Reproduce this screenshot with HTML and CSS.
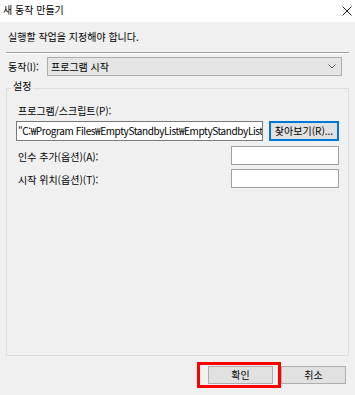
FILE: index.html
```html
<!DOCTYPE html>
<html lang="ko">
<head>
<meta charset="utf-8">
<link rel="stylesheet" href="styles.css">
</head>
<body>
<div class="window">
  <div class="titlebar">
    <span class="title">새 동작 만들기</span>
    <svg class="close" width="10" height="10" viewBox="0 0 10 10"><path d="M0.5 0.5 L9.5 9.5 M9.5 0.5 L0.5 9.5" stroke="#222" stroke-width="1" fill="none"/></svg>
  </div>
  <div class="content">
    <p class="instruction">실행할 작업을 지정해야 합니다.</p>
    <div class="separator"></div>
    <div class="action-row">
      <span class="action-label">동작(I):</span>
      <div class="combo">
        <span class="combo-text">프로그램 시작</span>
        <svg class="chevron" width="8" height="5" viewBox="0 0 8 5"><path d="M0.5 0.5 L4 4 L7.5 0.5" stroke="#606060" stroke-width="1" fill="none"/></svg>
      </div>
    </div>
    <fieldset class="group">
      <legend class="group-title">설정</legend>
      <div class="field-label">프로그램/스크립트(P):</div>
      <div class="program-row">
        <div class="textbox program"><span class="program-text">"C:₩Program Files₩EmptyStandbyList₩EmptyStandbyList.exe"</span></div>
        <div class="btn browse">찾아보기(R)...</div>
      </div>
      <div class="opt-row first">
        <span class="opt-label">인수 추가(옵션)(A):</span>
        <div class="textbox opt"></div>
      </div>
      <div class="opt-row">
        <span class="opt-label">시작 위치(옵션)(T):</span>
        <div class="textbox opt"></div>
      </div>
    </fieldset>
    <div class="footer">
      <div class="ok-wrap"><div class="btn dialog-btn">확인</div></div>
      <div class="btn dialog-btn">취소</div>
    </div>
  </div>
</div>
</body>
</html>
```

FILE: styles.css
```css
* { box-sizing: border-box; }
html, body { margin: 0; padding: 0; }
body {
  font-family: "Noto Sans CJK KR", "Noto Sans", sans-serif;
  font-size: 10px;
  color: #000;
  background: #f0f0f0;
}
.window {
  width: 355px;
  height: 395px;
  display: flex;
  flex-direction: column;
  overflow: hidden;
}
.titlebar {
  height: 22px;
  background: #fff;
  display: flex;
  align-items: center;
  justify-content: space-between;
  padding: 0 3px 2px 3px;
  line-height: 14px;
}
.title { color: #000; }
.close { display: block; margin-top: 1px; }
.content {
  flex: 1;
  background: #f0f0f0;
  display: flex;
  flex-direction: column;
  padding: 0 6px;
}
.instruction {
  margin: 8px 0 0 2px;
  line-height: 14px;
}
.separator {
  margin-top: 8px;
  border-top: 1px solid #a0a0a0;
  border-bottom: 1px solid #fff;
}
.action-row {
  margin-top: 3px;
  display: flex;
  align-items: center;
  height: 19px;
}
.action-label {
  width: 41px;
  padding-left: 2px;
  line-height: 14px;
}
.combo {
  width: 295px;
  height: 19px;
  background: #e5e5e5;
  border: 1px solid #adadad;
  display: flex;
  align-items: center;
  justify-content: space-between;
  padding: 0 5px 0 3px;
  line-height: 14px;
}
.chevron { display: block; }
.group {
  flex: 1;
  margin: 3px 0 0 0;
  padding: 0 9px;
  border: 1px solid #dcdcdc;
  min-width: 0;
}
.group-title {
  margin-left: -5px;
  padding: 0 2px 4px 2px;
  line-height: 14px;
}
.field-label {
  margin-top: 7px;
  padding-left: 2px;
  line-height: 14px;
}
.program-row {
  margin-top: 3px;
  display: flex;
  align-items: center;
}
.textbox {
  background: #fff;
  height: 20px;
}
.program {
  flex: 1;
  min-width: 0;
  border: 1px solid #7a7a7a;
  white-space: nowrap;
  overflow: hidden;
  line-height: 18px;
  padding-left: 1px;
}
.program-text {
  letter-spacing: -0.4px;
}
.btn {
  background: #e1e1e1;
  border: 1px solid #adadad;
  display: flex;
  align-items: center;
  justify-content: center;
  line-height: 14px;
}
.browse {
  width: 70px;
  height: 20px;
  margin-left: 6px;
  border-color: #0078d7;
  box-shadow: inset 0 0 0 1px #0078d7;
}
.opt-row {
  margin-top: 4px;
  display: flex;
  align-items: center;
  justify-content: space-between;
}
.opt-row.first { margin-top: 5px; }
.opt-label {
  padding-left: 2px;
  line-height: 14px;
  padding-top: 3px;
}
.opt {
  width: 108px;
  height: 19px;
  border: 1px solid #a0a0a0;
}
.footer {
  display: flex;
  justify-content: flex-end;
  gap: 8px;
  margin: 10px 3px 11px 0;
}
.dialog-btn {
  width: 65px;
  height: 18px;
}
.ok-wrap { position: relative; }
.ok-wrap::after {
  content: "";
  position: absolute;
  left: -11px;
  top: -4px;
  right: -8px;
  bottom: -4px;
  border: 3px solid #ff0000;
}
```
